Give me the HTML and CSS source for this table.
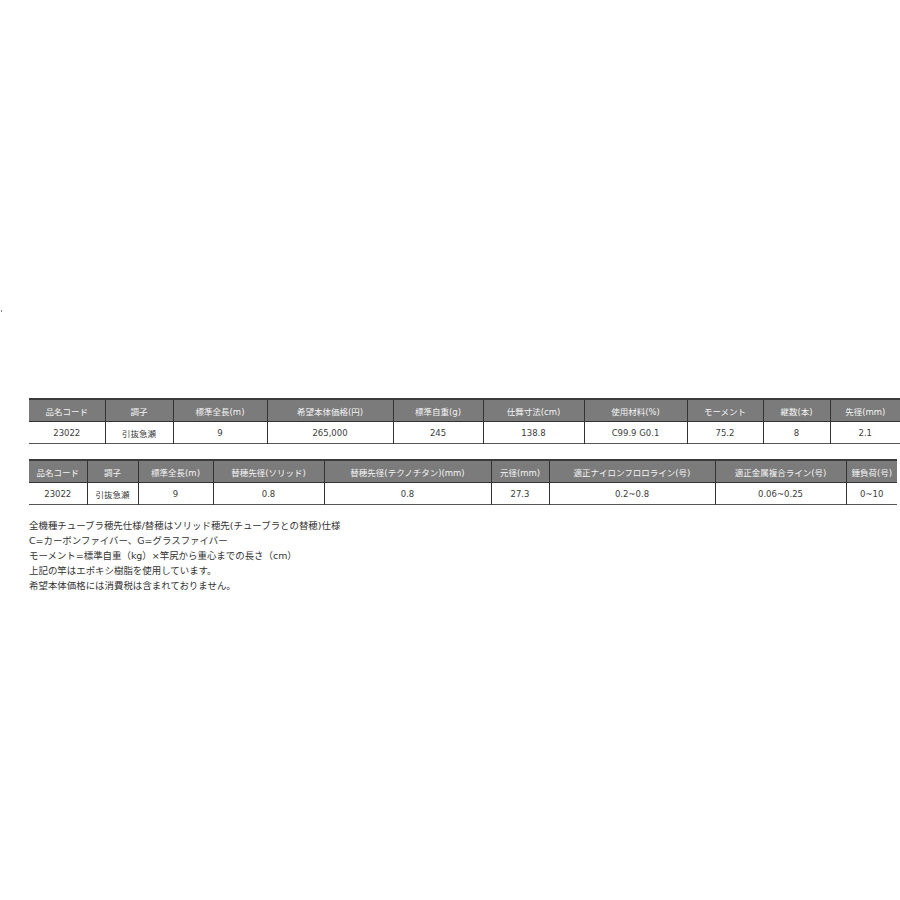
FILE: index.html
```html
<!DOCTYPE html>
<html lang="ja">
<head>
<meta charset="utf-8">
<title>仕様</title>
<link rel="stylesheet" href="styles.css">
</head>
<body>
<div class="dot"></div>
<div class="page">
  <table class="spec spec1">
    <colgroup>
      <col style="width:76px"><col style="width:68px"><col style="width:94px"><col style="width:126px"><col style="width:90px"><col style="width:101px"><col style="width:103px"><col style="width:76px"><col style="width:67px"><col style="width:70px">
    </colgroup>
    <thead>
      <tr><th>品名コード</th><th>調子</th><th>標準全長(m)</th><th>希望本体価格(円)</th><th>標準自重(g)</th><th>仕舞寸法(cm)</th><th>使用材料(%)</th><th>モーメント</th><th>継数(本)</th><th>先径(mm)</th></tr>
    </thead>
    <tbody>
      <tr><td>23022</td><td>引抜急瀬</td><td>9</td><td>265,000</td><td>245</td><td>138.8</td><td>C99.9 G0.1</td><td>75.2</td><td>8</td><td>2.1</td></tr>
    </tbody>
  </table>
  <table class="spec spec2">
    <colgroup>
      <col style="width:58px"><col style="width:51px"><col style="width:75px"><col style="width:111px"><col style="width:167px"><col style="width:58px"><col style="width:166px"><col style="width:131px"><col style="width:51px">
    </colgroup>
    <thead>
      <tr><th>品名コード</th><th>調子</th><th>標準全長(m)</th><th>替穂先径(ソリッド)</th><th>替穂先径(テクノチタン)(mm)</th><th>元径(mm)</th><th>適正ナイロンフロロライン(号)</th><th>適正金属複合ライン(号)</th><th>錘負荷(号)</th></tr>
    </thead>
    <tbody>
      <tr><td>23022</td><td>引抜急瀬</td><td>9</td><td>0.8</td><td>0.8</td><td>27.3</td><td>0.2~0.8</td><td>0.06~0.25</td><td>0~10</td></tr>
    </tbody>
  </table>
  <div class="notes">
    <p>全機種チューブラ穂先仕様/替穂はソリッド穂先(チューブラとの替穂)仕様</p>
    <p>C=カーボンファイバー、G=グラスファイバー</p>
    <p>モーメント=標準自重（kg）×竿尻から重心までの長さ（cm）</p>
    <p>上記の竿はエポキシ樹脂を使用しています。</p>
    <p>希望本体価格には消費税は含まれておりません。</p>
  </div>
</div>
</body>
</html>
```
FILE: styles.css
```css
html, body {
  margin: 0;
  padding: 0;
  background: #fff;
  overflow: hidden;
}
body {
  font-family: "DejaVu Sans", "Noto Sans CJK JP", sans-serif;
  color: #333;
  position: relative;
  width: 900px;
  height: 900px;
}
.dot {
  position: absolute;
  left: 1px;
  top: 310px;
  width: 1px;
  height: 2px;
  background: #888;
}
.page {
  padding: 398px 0 0 29px;
}
.spec {
  border-collapse: collapse;
  table-layout: fixed;
  font-size: 8.5px;
  text-align: center;
  border-top: 2px solid #3a3a3a;
  border-bottom: 1px solid #555;
}
.spec1 { width: 871px; }
.spec2 { width: 868px; margin-top: 15px; }
.spec th,
.spec td {
  padding: 0;
  border-left: 1px solid #333;
  white-space: nowrap;
  overflow: hidden;
}
.spec th:first-child,
.spec td:first-child {
  border-left: none;
}
.spec th {
  background: #7b7b7b;
  color: #f4f4f4;
  font-weight: normal;
  height: 21px;
  border-bottom: 1px solid #333;
}
.spec td {
  height: 21px;
  color: #3c3c3c;
  background: #fff;
}
.notes {
  margin-top: 13px;
  font-size: 9.45px;
  line-height: 15px;
  color: #333;
}
.notes p {
  margin: 0;
}
```
